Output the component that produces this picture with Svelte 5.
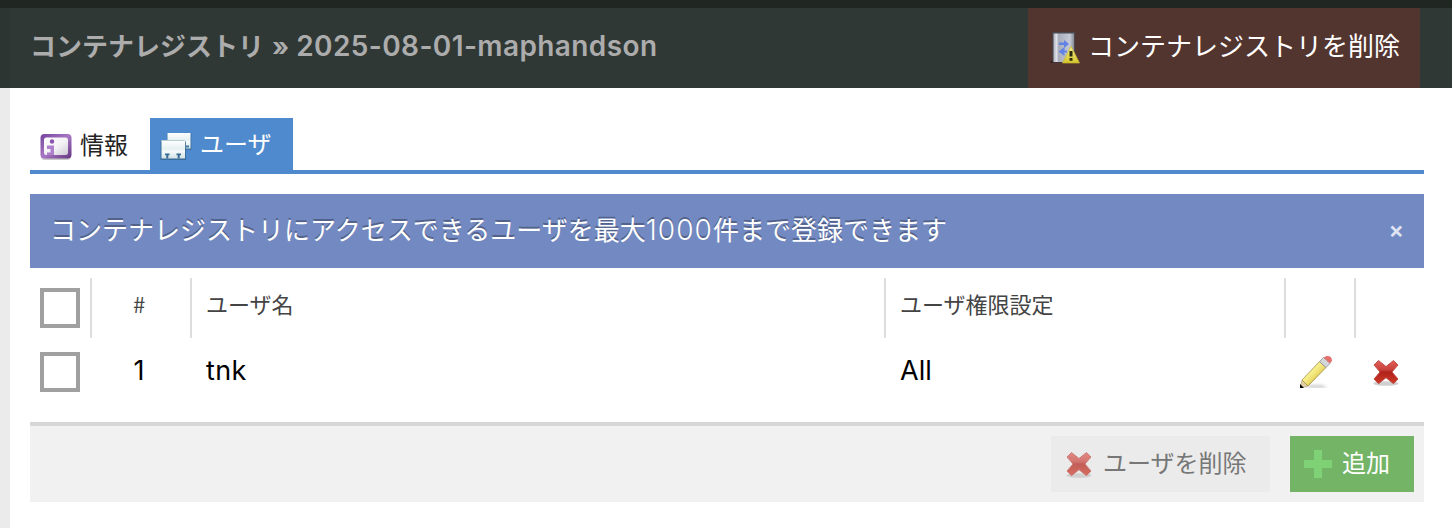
<script>
  const users = [{ id: 1, name: 'tnk', permission: 'All' }];
</script>

{#snippet cross()}
  <svg class="cross" width="32" height="32" viewBox="0 0 32 32" aria-hidden="true">
    <defs>
      <linearGradient id="red" x1="0" y1="0" x2="0" y2="1">
        <stop offset="0" stop-color="#e0605a" />
        <stop offset=".4" stop-color="#c9423b" />
        <stop offset=".5" stop-color="#b0221a" />
        <stop offset="1" stop-color="#d03a29" />
      </linearGradient>
      <filter id="soft" x="-20%" y="-20%" width="140%" height="140%"><feGaussianBlur stdDeviation=".7" /></filter>
    </defs>
    <ellipse cx="16" cy="27.500" rx="12.500" ry="2.300" fill="#999" opacity=".45" filter="url(#soft)" />
    <path d="M8.500 4.500 16 10.500l7.500-6 4.500 4.500-6 7 6 7-4.500 4.700-7.500-6-7.500 6-4.500-4.700 6-7-6-7z" fill="url(#red)" stroke="#bb4a42" stroke-width=".9" stroke-linejoin="round" filter="url(#soft)" />
  </svg>
{/snippet}

<div class="page">
  <div class="strip"></div>
  <header>
    <h1>コンテナレジストリ<span class="raquo">»</span><span class="repo">2025-08-01-maphandson</span></h1>
    <button class="destroy">
      <svg width="32" height="32" viewBox="0 0 32 32" aria-hidden="true">
        <defs>
          <linearGradient id="box"><stop offset="0" stop-color="#aeb3bf" /><stop offset=".15" stop-color="#dfe1e9" /><stop offset=".25" stop-color="#a9adba" /><stop offset=".8" stop-color="#c6c9d6" /><stop offset="1" stop-color="#868b97" /></linearGradient>
          <linearGradient id="warn" x1="0" y1="0" x2="0" y2="1"><stop offset="0" stop-color="#f5ef91" /><stop offset="1" stop-color="#d6c62c" /></linearGradient>
          <filter id="blur1" x="-20%" y="-20%" width="140%" height="140%"><feGaussianBlur stdDeviation=".65" /></filter>
        </defs>
        <g filter="url(#blur1)">
          <path d="M0 31 4 26h22v5H1z" fill="#1c100e" opacity=".65" />
          <path d="M2.500 0h22.500v30.500H2.500z" fill="#4c4a50" />
          <path d="M3.500 1.500h20.500V30H3.500z" fill="url(#box)" />
          <path d="M9 13v-2.500h5V8l5 4-5 4v-3zM17 20.500h-2.500V24l-6-4.500 6-4.500v3.500H17z" fill="#6283e6" />
          <path d="M21 14 29.500 31H12.500z" fill="url(#warn)" stroke="#c6b62f" stroke-width=".7" />
          <path d="M19.500 19h3v5.500h-3zM19.500 26h3v2.800h-3z" fill="#2f2c10" />
        </g>
      </svg>
      <span>コンテナレジストリを削除</span>
    </button>
  </header>

  <main>
    <nav>
      <div class="tab">
        <svg width="32" height="32" viewBox="0 0 32 32" aria-hidden="true">
          <defs>
            <linearGradient id="violet" x1="0" y1="0" x2="1" y2="1"><stop offset="0" stop-color="#74439a" /><stop offset=".5" stop-color="#a878c4" /><stop offset="1" stop-color="#63337f" /></linearGradient>
            <linearGradient id="pane" x1="0" y1="0" x2="1" y2="1"><stop offset="0" stop-color="#fff" /><stop offset=".55" stop-color="#f2f1f4" /><stop offset="1" stop-color="#cfc8d5" /></linearGradient>
            <filter id="blur2" x="-20%" y="-20%" width="140%" height="140%"><feGaussianBlur stdDeviation=".65" /></filter>
          </defs>
          <g filter="url(#blur2)">
            <rect x="1" y="6" width="30" height="24" rx="4" fill="#777" opacity=".4" />
            <rect x=".5" y="4" width="31" height="24.500" rx="4" fill="url(#violet)" />
            <rect x="4" y="7.500" width="24" height="17.500" rx="2.500" fill="url(#pane)" />
            <circle cx="12" cy="11.500" r="2.200" fill="#8a55ad" />
            <path d="M7 15.500h7V25h-3.500v-6H7zM7 22.500h3.500V25H7z" fill="#ae80cc" />
          </g>
        </svg>
        <span>情報</span>
      </div>
      <div class="tab active">
        <svg width="32" height="32" viewBox="0 0 32 32" aria-hidden="true">
          <defs>
            <linearGradient id="card" x1="0" y1="0" x2="0" y2="1"><stop offset="0" stop-color="#fff" /><stop offset=".45" stop-color="#e7f0f0" /><stop offset=".6" stop-color="#f5fafa" /><stop offset="1" stop-color="#d4e2e5" /></linearGradient>
            <filter id="blur3" x="-20%" y="-20%" width="140%" height="140%"><feGaussianBlur stdDeviation=".65" /></filter>
          </defs>
          <g filter="url(#blur3)">
            <path d="M7 3.500h24.500V20H7z" fill="#3e709d" opacity=".8" />
            <path d="M7.500 3H30.500V18.500H7.500z" fill="url(#card)" />
            <path d="M26 15.500h3v2h-3z" fill="#427aa6" />
            <path d="M.5 11.500h25.500V30H.5z" fill="#33658f" opacity=".8" />
            <path d="M1.500 10.500H25V28.500H1.500z" fill="url(#card)" />
            <path d="M5 23.500h4.500v1.800H8.300v3.200H6.300v-3.200H5zM16.500 23.500H21v1.800h-1.300v3.200h-2v-3.200h-1.200z" fill="#376b93" />
            <path d="M1.500 10.500H25" stroke="#b9cfcf" />
          </g>
        </svg>
        <span>ユーザ</span>
      </div>
    </nav>

    <div class="notice">
      <p>コンテナレジストリにアクセスできるユーザを最大<span class="num">1000</span>件まで登録できます</p>
      <button class="close" aria-label="close">×</button>
    </div>

    <div class="grid head">
      <div class="cell check"><input type="checkbox" /></div>
      <div class="cell no"><span>#</span></div>
      <div class="cell"><span>ユーザ名</span></div>
      <div class="cell"><span>ユーザ権限設定</span></div>
      <div class="cell"></div>
      <div class="cell"></div>
    </div>
    {#each users as user}
      <div class="grid row">
        <div class="check"><input type="checkbox" /></div>
        <div class="no"><span>{user.id}</span></div>
        <div class="text"><span class="name">{user.name}</span></div>
        <div class="text"><span class="perm">{user.permission}</span></div>
        <div class="icon">
          <svg width="32" height="32" viewBox="0 0 32 32" aria-hidden="true">
            <defs>
              <linearGradient id="wood" x1=".2" y1=".3" x2=".7" y2=".8"><stop offset="0" stop-color="#b9a745" /><stop offset=".3" stop-color="#f8ef91" /><stop offset=".65" stop-color="#ecdc6a" /><stop offset="1" stop-color="#aa9842" /></linearGradient>
              <filter id="blur4" x="-20%" y="-20%" width="140%" height="140%"><feGaussianBlur stdDeviation=".7" /></filter>
              <filter id="shade" x="-20%" y="-60%" width="140%" height="220%"><feGaussianBlur stdDeviation="1.500" /></filter>
            </defs>
            <path d="M3 32 11 29l11 0 6 3z" fill="#999" opacity=".5" filter="url(#shade)" />
            <g filter="url(#blur4)">
              <path d="M0 32 2 24 8 30z" fill="#e0cfa4" stroke="#a99a72" stroke-width=".6" />
              <path d="M2 24 19.500 5.500l6.500 6L8 30z" fill="url(#wood)" stroke="#a79747" stroke-width=".8" />
              <path d="m19.500 5.500 4-4L30 7.500l-4 4z" fill="#d4d7da" stroke="#8f9294" stroke-width=".8" />
              <path d="m23.500 1.500 3-1.500q5.500-.5 5.500 5L30 7.500z" fill="#e4706e" />
              <path d="M0 32v-4l4 4z" fill="#000" />
            </g>
          </svg>
        </div>
        <div class="icon">{@render cross()}</div>
      </div>
    {/each}

    <footer>
      <button class="remove">{@render cross()}<span>ユーザを削除</span></button>
      <button class="add">
        <svg width="28" height="28" viewBox="0 0 28 28" aria-hidden="true"><path d="M10 0h8v10h10v8H18v10h-8V18H0v-8h10z" fill="#7ed174" /></svg>
        <span>追加</span>
      </button>
    </footer>
  </main>
</div>

<style>
  :global(body) { background: #fff; }
  .page, .page * { box-sizing: border-box; }
  .page {
    width: 1452px;
    height: 528px;
    display: grid;
    grid-template-rows: 8px 80px 440px;
    overflow: hidden;
    color: #000;
    font-family: "Noto Sans CJK JP", sans-serif;
    font-size: 26px;
  }
  svg { display: block; flex: none; }
  button { border: 0; margin: 0; padding: 0; font: inherit; display: flex; align-items: center; white-space: nowrap; }
  .strip { background: #202622; }
  header {
    display: flex;
    justify-content: space-between;
    background: #303836;
    border-left: 10px solid #2d3533;
    padding: 0 32px 0 20px;
  }
  h1 { margin: 0; font-size: 26px; line-height: 74px; font-weight: 700; color: #acacac; white-space: nowrap; }
  .raquo { margin: 0 7px 0 8px; font-family: Inter, sans-serif; }
  .repo { font-family: Inter, sans-serif; font-size: 28px; font-weight: 600; letter-spacing: .4px; }
  .destroy { width: 392px; background: #533530; color: #fff; padding-left: 22px; gap: 6px; }
  .destroy span { line-height: 74px; padding-bottom: 6px; }
  main { border-left: 10px solid #ebebeb; background: #fff; padding: 30px 28px 0 20px; }
  nav { height: 56px; display: flex; border-bottom: 4px solid #4f8ace; }
  .tab { display: flex; align-items: center; width: 120px; padding-left: 10px; gap: 8px; font-size: 24px; line-height: 52px; color: #222; }
  .tab svg { margin-top: 3px; }
  .tab.active { width: 143px; background: #4f8ace; color: #fff; line-height: 50px; }
  .tab.active span { padding-bottom: 2px; }
  .tab.active svg { margin-top: 4px; }
  .notice {
    margin-top: 20px;
    height: 74px;
    display: flex;
    justify-content: space-between;
    padding: 0 20px;
    background: #7389c1;
    color: #fff;
  }
  .notice p { margin: 0; line-height: 70px; white-space: nowrap; text-shadow: 0 -2px 0 rgba(0, 0, 0, .3); }
  .num { font-family: Inter, sans-serif; font-size: 28px; font-weight: 300; letter-spacing: 1.1px; line-height: 1; }
  .close { background: none; color: #dfe4f2; padding-bottom: 1px; font: 600 23px/1 Inter, sans-serif; }
  .grid { display: grid; grid-template-columns: 60px 100px 694px 400px 70px 70px; }
  .head { margin-top: 10px; height: 60px; font-size: 22px; line-height: 51px; color: #444; }
  .cell + .cell { border-left: 2px solid #ddd; padding-left: 14px; }
  .head .no { padding: 0 4px 0 0; }
  .no { text-align: center; }
  .check { padding: 10px 0 0 10px; line-height: 0; }
  input { appearance: none; margin: 0; width: 40px; height: 40px; border: 4px solid #a0a0a0; background: #fff; }
  .row { height: 84px; font-size: 27px; line-height: 66px; font-family: Inter, "Noto Sans CJK JP", sans-serif; }
  .row .check { padding-top: 14px; line-height: 0; }
  .row .no { padding-right: 2px; }
  .row .text { padding-left: 16px; }
  .name { letter-spacing: .4px; }
  .icon { padding: 18px 0 0 16px; }
  footer {
    height: 80px;
    display: flex;
    justify-content: flex-end;
    gap: 20px;
    padding: 10px;
    background: #f1f1f1;
    border-top: 4px solid #d7d7d7;
    font-size: 24px;
    line-height: 52px;
  }
  .remove { width: 219px; background: #ebebeb; color: #777; padding-left: 12px; gap: 8px; }
  .remove :global(svg) { opacity: .7; }
  .add { width: 124px; background: #73b466; color: #fff; padding-left: 14px; gap: 10px; }
  footer span { padding-bottom: 4px; }
</style>
